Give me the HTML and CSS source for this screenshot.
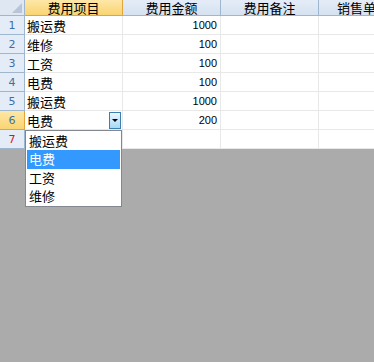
FILE: index.html
```html
<!DOCTYPE html>
<html>
<head>
<meta charset="utf-8">
<link rel="stylesheet" href="styles.css">
</head>
<body>
<div class="sheet">
  <div class="grid">
    <div class="corner"><span class="tri"></span></div>
    <div class="colhead sel">费用项目</div>
    <div class="colhead">费用金额</div>
    <div class="colhead">费用备注</div>
    <div class="colhead last">销售单号</div>

    <div class="rowhead">1</div><div class="cell">搬运费</div><div class="cell num">1000</div><div class="cell"></div><div class="cell last"></div>
    <div class="rowhead">2</div><div class="cell">维修</div><div class="cell num">100</div><div class="cell"></div><div class="cell last"></div>
    <div class="rowhead">3</div><div class="cell">工资</div><div class="cell num">100</div><div class="cell"></div><div class="cell last"></div>
    <div class="rowhead">4</div><div class="cell">电费</div><div class="cell num">100</div><div class="cell"></div><div class="cell last"></div>
    <div class="rowhead">5</div><div class="cell">搬运费</div><div class="cell num">1000</div><div class="cell"></div><div class="cell last"></div>
    <div class="rowhead cur">6</div><div class="cell edit">电费<span class="dropbtn"><span class="arrow"></span></span></div><div class="cell num">200</div><div class="cell"></div><div class="cell last"></div>
    <div class="rowhead newrow">7</div><div class="cell"></div><div class="cell"></div><div class="cell"></div><div class="cell last"></div>
  </div>
  <ul class="droplist">
    <li>搬运费</li>
    <li class="hi">电费</li>
    <li>工资</li>
    <li>维修</li>
  </ul>
</div>
</body>
</html>
```

FILE: styles.css
```css
html, body {
  margin: 0;
  padding: 0;
}
body {
  background: #ababab;
  width: 374px;
  height: 362px;
  overflow: hidden;
  font-family: "Noto Sans CJK SC", "DejaVu Sans", sans-serif;
  font-size: 13px;
  color: #000;
}
.sheet {
  position: relative;
  width: 374px;
}
.grid {
  display: grid;
  grid-template-columns: 25px 98px 98px 98px 1fr;
  grid-template-rows: 16px repeat(7, 19px);
  background: #fff;
}
.corner {
  background: #dfe7f2;
  border-right: 1px solid #9eb6ce;
  border-bottom: 1px solid #9eb6ce;
  position: relative;
}
.tri {
  position: absolute;
  right: 2px;
  bottom: 2px;
  width: 0;
  height: 0;
  border-left: 10px solid transparent;
  border-bottom: 10px solid #b7c5d6;
}
.colhead {
  background: linear-gradient(#e4ecf7, #d6e2f1);
  border-right: 1px solid #9eb6ce;
  border-bottom: 1px solid #9eb6ce;
  display: flex;
  align-items: center;
  justify-content: center;
  font-size: 13px;
  line-height: 15px;
  white-space: nowrap;
}
.colhead.last {
  justify-content: flex-start;
  padding-left: 18px;
  border-right: none;
  overflow: hidden;
}
.colhead.sel {
  background: linear-gradient(#fde7a8, #f9d471);
  border-right: 1px solid #e2a53c;
  border-bottom: 1px solid #e2a53c;
}
.rowhead {
  background: #e4ecf7;
  border-right: 1px solid #9eb6ce;
  border-bottom: 1px solid #9eb6ce;
  display: flex;
  align-items: center;
  justify-content: center;
  font-family: "DejaVu Sans", sans-serif;
  font-size: 11px;
  color: #3f6ea5;
}
.rowhead.cur {
  background: linear-gradient(#fde7a8, #f9d471);
  border-bottom: 1px solid #e2a53c;
  border-right: 1px solid #e2a53c;
}
.rowhead.newrow {
  color: #e0101a;
}
.cell {
  border-right: 1px solid #e8e8e8;
  border-bottom: 1px solid #e8e8e8;
  display: flex;
  align-items: center;
  padding: 0 2px;
  font-size: 13px;
  white-space: nowrap;
  overflow: hidden;
  position: relative;
}
.cell.num {
  justify-content: flex-end;
  padding-right: 3px;
  font-family: "Liberation Sans", sans-serif;
  font-size: 11px;
}
.cell.last {
  border-right: none;
}
.dropbtn {
  position: absolute;
  right: 1px;
  top: 1px;
  width: 10px;
  height: 15px;
  border: 1px solid #3c7fb1;
  background: linear-gradient(#eaf6fd, #a7d9f5);
  display: flex;
  align-items: center;
  justify-content: center;
}
.arrow {
  width: 0;
  height: 0;
  border-left: 3px solid transparent;
  border-right: 3px solid transparent;
  border-top: 3px solid #000;
}
.droplist {
  position: absolute;
  left: 25px;
  top: 130px;
  width: 93px;
  height: 73px;
  margin: 0;
  padding: 1px;
  list-style: none;
  background: #fff;
  border: 1px solid #828790;
  box-sizing: content-box;
  font-size: 13px;
}
.droplist li {
  height: 18.25px;
  line-height: 18px;
  padding-left: 2px;
  white-space: nowrap;
}
.droplist li.hi {
  background: #3399ff;
  color: #fff;
}
```
